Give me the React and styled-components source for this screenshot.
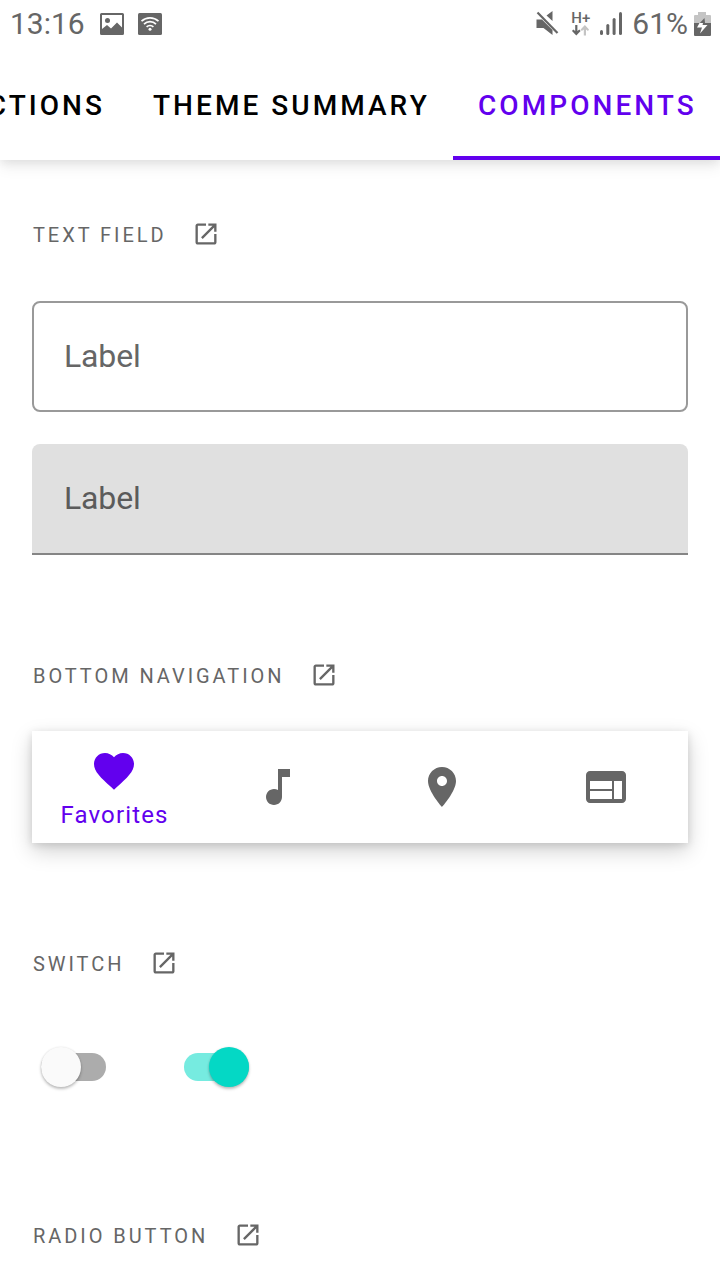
import React from 'react';
import styled, { createGlobalStyle } from 'styled-components';

const GlobalStyle = createGlobalStyle`
  * { box-sizing: border-box; }
  body {
    margin: 0;
    background: #fff;
    overflow: hidden;
    font-family: Roboto, "Liberation Sans", sans-serif;
  }
`;

const Screen = styled.div`
  width: 720px;
  height: 1280px;
  overflow: hidden;
  background: #fff;
  color: #666;
`;

const AppBar = styled.header`
  height: 160px;
  background: #fff;
  box-shadow: 0 2px 10px rgba(0, 0, 0, 0.09), 0 8px 14px rgba(0, 0, 0, 0.06);
`;

const StatusBar = styled.div`
  display: flex;
  justify-content: space-between;
  height: 48px;
  padding: 0 9px 0 10px;
`;

const StatusGroup = styled.div`
  display: flex;
  align-items: center;
  height: 47px;
`;

const StatusText = styled.span`
  font-size: 30px;
  line-height: 48px;
  margin-right: ${(p) => p.$after}px;
  white-space: nowrap;
`;

const StatusIcon = styled.svg`
  display: block;
  flex: none;
  fill: #666;
  margin-right: ${(p) => p.$after || 0}px;
`;

const TabStrip = styled.nav`
  display: flex;
  justify-content: flex-end;
  height: 112px;
`;

const Tab = styled.div`
  flex: none;
  width: ${(p) => p.$width}px;
  height: 112px;
  padding: 0 0 0 25px;
  border-bottom: 4px solid ${(p) => (p.$active ? '#6200ee' : 'transparent')};
  color: ${(p) => (p.$active ? '#6200ee' : '#000')};
  font-size: 28px;
  font-weight: 500;
  line-height: 115px;
  letter-spacing: 3.05px;
  white-space: nowrap;
`;

const Content = styled.main`
  padding: 60px 32px 0;
`;

const Section = styled.section`
  height: ${(p) => p.$height}px;
`;

const SectionHeader = styled.div`
  display: flex;
  align-items: center;
  gap: 25.5px;
  height: 28px;
  padding-left: 1px;
`;

const SectionTitle = styled.h2`
  margin: 0;
  font-size: 20px;
  font-weight: 400;
  line-height: 30px;
  letter-spacing: 2.94px;
  padding-top: 2px;
  white-space: nowrap;
`;

const Glyph = styled.svg`
  display: block;
  flex: none;
  width: ${(p) => p.$size}px;
  height: ${(p) => p.$size}px;
  fill: currentColor;
`;

const Field = styled.div`
  height: 111px;
  font-size: 32px;
  letter-spacing: -0.15px;
`;

const OutlinedField = styled(Field)`
  margin-top: 53px;
  padding-left: 30px;
  line-height: 106px;
  border: 2px solid #999;
  border-radius: 8px;
`;

const FilledField = styled(Field)`
  margin-top: 32px;
  padding-left: 32px;
  line-height: 108px;
  background: #e0e0e0;
  border-bottom: 2px solid #858585;
  border-radius: 8px 8px 0 0;
  color: #5b5b5b;
`;

const BottomNav = styled.div`
  display: grid;
  grid-template-columns: repeat(4, 1fr);
  height: 112px;
  margin-top: 42px;
  background: #fff;
  box-shadow: 0 2px 8px rgba(0, 0, 0, 0.12), 0 8px 20px rgba(0, 0, 0, 0.18);
`;

const NavItem = styled.div`
  display: flex;
  flex-direction: column;
  align-items: center;
  padding-top: ${(p) => (p.$active ? 16 : 32)}px;
  color: ${(p) => (p.$active ? '#6200ee' : '#666')};
`;

const NavLabel = styled.span`
  font-size: 24px;
  line-height: 28px;
  margin-top: 6px;
  padding-left: 1px;
  letter-spacing: 1.15px;
`;

const SwitchRow = styled.div`
  display: flex;
  gap: 78px;
  margin-top: 76px;
  padding-left: 9px;
`;

const SwitchTrack = styled.div`
  display: flex;
  align-items: center;
  justify-content: ${(p) => (p.$on ? 'flex-end' : 'flex-start')};
  width: 65px;
  height: 28px;
  border-radius: 14px;
  background: ${(p) => (p.$on ? '#76ebe0' : '#acacac')};
`;

const SwitchThumb = styled.div`
  flex: none;
  width: 40px;
  height: 40px;
  border-radius: 50%;
  background: ${(p) => (p.$on ? '#04d8c5' : '#fafafa')};
  box-shadow: 0 2px 3px rgba(0, 0, 0, 0.25), 0 0 2px rgba(0, 0, 0, 0.1);
`;

const glyphs = {
  open: 'M19 19H5V5h7V3H5c-1.11 0-2 .9-2 2v14c0 1.1.89 2 2 2h14c1.1 0 2-.9 2-2v-7h-2v7zM14 3v2h3.59l-9.83 9.83 1.41 1.41L19 6.41V10h2V3h-7z',
  heart: 'M12 21.35l-1.45-1.32C5.4 15.36 2 12.28 2 8.5 2 5.42 4.42 3 7.5 3c1.74 0 3.41.81 4.5 2.09C13.09 3.81 14.76 3 16.5 3 19.58 3 22 5.42 22 8.5c0 3.78-3.4 6.86-8.55 11.54L12 21.35z',
  note: 'M12 3v10.55c-.59-.34-1.27-.55-2-.55-2.21 0-4 1.79-4 4s1.79 4 4 4 4-1.79 4-4V7h4V3h-6z',
  place: 'M12 2C8.13 2 5 5.13 5 9c0 5.25 7 13 7 13s7-7.75 7-13c0-3.87-3.13-7-7-7zm0 9.5c-1.38 0-2.5-1.12-2.5-2.5s1.12-2.5 2.5-2.5 2.5 1.12 2.5 2.5-1.12 2.5-2.5 2.5z',
  web: 'M20 4H4c-1.1 0-2 .9-2 2v12c0 1.1.9 2 2 2h16c1.1 0 2-.9 2-2V6c0-1.1-.9-2-2-2zm-5 14H4v-4h11v4zm0-5H4V9h11v4zm5 5h-4V9h4v9z',
};

function Icon({ name, size }) {
  return (
    <Glyph $size={size} viewBox="0 0 24 24">
      <path d={glyphs[name]} />
    </Glyph>
  );
}

function Header({ children }) {
  return (
    <SectionHeader>
      <SectionTitle>{children}</SectionTitle>
      <Icon name="open" size={28} />
    </SectionHeader>
  );
}

function PictureIcon() {
  return (
    <StatusIcon $after={14} width="24" height="22" viewBox="0 0 24 22">
      <path fillRule="evenodd" d="M1.500 0h21a1.500 1.500 0 0 1 1.500 1.500v19a1.500 1.500 0 0 1-1.500 1.500H1.500A1.500 1.500 0 0 1 0 20.500v-19A1.500 1.500 0 0 1 1.500 0zM2 2v14l5-4 4 3.500 6-6 5 5V2z" />
      <circle cx="7.500" cy="7.500" r="2.500" />
    </StatusIcon>
  );
}

function WifiIcon() {
  return (
    <StatusIcon width="24" height="22" viewBox="0 0 24 22">
      <rect width="24" height="22" rx="1.500" />
      <g fill="none" stroke="#fff" strokeWidth="1.700">
        <path d="M3.500 8.200a12.500 12.500 0 0 1 17 0" />
        <path d="M6 11.200a8.500 8.500 0 0 1 12 0" />
        <path d="M8.600 13.900a5 5 0 0 1 6.800 0" />
      </g>
      <circle cx="12" cy="16.300" r="1.500" fill="#fff" />
    </StatusIcon>
  );
}

function MutedIcon() {
  return (
    <StatusIcon $after={13} width="23" height="25" viewBox="0 0 23 25">
      <path d="M.500 8.500H6L16.500 19v5L7.500 17H.500zM10.500 4.500L16.500 0v10z" />
      <path d="M1.500 1.500L21.500 22" fill="none" stroke="#666" strokeWidth="2.200" />
    </StatusIcon>
  );
}

const NetworkStack = styled.div`
  display: flex;
  flex-direction: column;
  align-items: center;
  width: 17px;
  margin-right: 11px;
`;

const NetworkLabel = styled.span`
  font-size: 15px;
  font-weight: 500;
  line-height: 13px;
`;

function NetworkIcon() {
  return (
    <NetworkStack>
      <NetworkLabel>H+</NetworkLabel>
      <StatusIcon width="17" height="11" viewBox="0 0 17 11">
        <path d="M3.200 0h2.200v6l2-1.600 1.200 1.600-4.300 4.500L0 6l1.200-1.600 2 1.600z" />
        <path fill="#c4c4c4" d="M11.800 10.500H14V4.400L16 6l1-1.500L12.900 0 8.600 4.500 9.800 6l2-1.600z" />
      </StatusIcon>
    </NetworkStack>
  );
}

function SignalIcon() {
  return (
    <StatusIcon $after={10} width="22" height="23" viewBox="0 0 22 23">
      <rect x="0" y="18" width="3" height="5" rx="1.500" />
      <rect x="6.300" y="12" width="3" height="11" rx="1.500" />
      <rect x="12.600" y="6" width="3" height="17" rx="1.500" />
      <rect x="19" y="0" width="3" height="23" rx="1.500" />
    </StatusIcon>
  );
}

function BatteryIcon() {
  return (
    <StatusIcon width="17" height="24" viewBox="0 0 17 24">
      <path fill="#c4c4c4" d="M4 0h8v3h4q1 0 1 1v7H0V4q0-1 1-1h3z" />
      <path d="M0 11h17v12q0 1-1 1H1q-1 0-1-1z" />
      <path fill="#666" d="M10.500 6L3 14h5V11h3z" />
      <path fill="#fff" d="M5.500 11h3.500l-.500 2H13.500L6 21.500l2-6H3z" />
    </StatusIcon>
  );
}

export default function App() {
  return (
    <>
      <GlobalStyle />
      <Screen>
        <AppBar>
          <StatusBar>
            <StatusGroup>
              <StatusText $after={15}>13:16</StatusText>
              <PictureIcon />
              <WifiIcon />
            </StatusGroup>
            <StatusGroup>
              <MutedIcon />
              <NetworkIcon />
              <SignalIcon />
              <StatusText $after={6}>61%</StatusText>
              <BatteryIcon />
            </StatusGroup>
          </StatusBar>
          <TabStrip>
            <Tab $width={228}>FUNCTIONS</Tab>
            <Tab $width={325}>THEME SUMMARY</Tab>
            <Tab $width={267} $active>COMPONENTS</Tab>
          </TabStrip>
        </AppBar>
        <Content>
          <Section $height={441}>
            <Header>TEXT FIELD</Header>
            <OutlinedField>Label</OutlinedField>
            <FilledField>Label</FilledField>
          </Section>
          <Section $height={288}>
            <Header>BOTTOM NAVIGATION</Header>
            <BottomNav>
              <NavItem $active>
                <Icon name="heart" size={48} />
                <NavLabel>Favorites</NavLabel>
              </NavItem>
              <NavItem><Icon name="note" size={48} /></NavItem>
              <NavItem><Icon name="place" size={48} /></NavItem>
              <NavItem><Icon name="web" size={48} /></NavItem>
            </BottomNav>
          </Section>
          <Section $height={272}>
            <Header>SWITCH</Header>
            <SwitchRow>
              <SwitchTrack><SwitchThumb /></SwitchTrack>
              <SwitchTrack $on><SwitchThumb $on /></SwitchTrack>
            </SwitchRow>
          </Section>
          <Section $height={59}>
            <Header>RADIO BUTTON</Header>
          </Section>
        </Content>
      </Screen>
    </>
  );
}
